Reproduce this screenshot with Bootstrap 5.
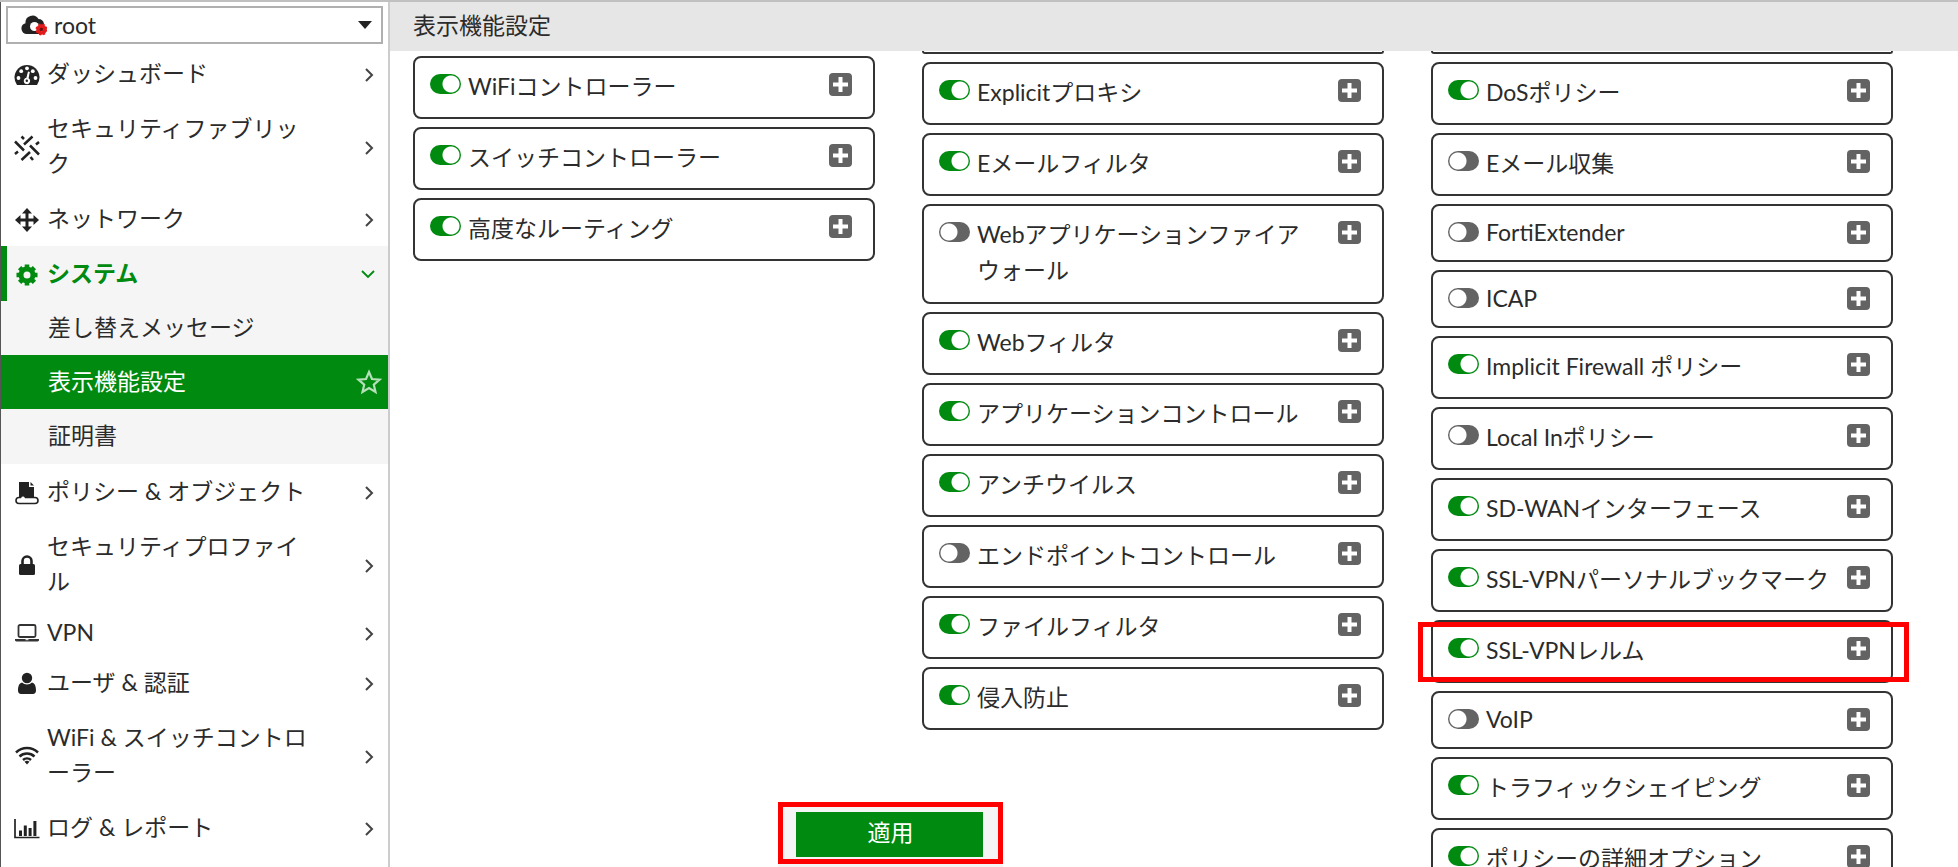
<!DOCTYPE html>
<html lang="ja">
<head>
<meta charset="utf-8">
<meta name="viewport" content="width=device-width, initial-scale=1">
<title>表示機能設定</title>
<link href="https://cdn.jsdelivr.net/npm/bootstrap@5.3.0/dist/css/bootstrap.min.css" rel="stylesheet">
<script src="https://cdn.jsdelivr.net/npm/bootstrap@5.3.0/dist/js/bootstrap.bundle.min.js"></script>
<style>
:root { --green: #008a10; --ink: #2b2b2b; --grey: #636363; }
body { font-family: Lato, "Noto Sans CJK JP", sans-serif; font-size: 23px; line-height: 35px; color: var(--ink); background: #fff; border-top: 2px solid #c0c0c0; }
.app-side { width: 390px; border-left: 1px solid #555; border-right: 2px solid #ccc; }
.vdom { margin: 4px 5px 2px 5px; }
.vdom select { height: 38px; padding: 0 0 0 46px; font-size: 23px; line-height: 34px; color: var(--ink); border: 2px solid #b0b0b0; border-radius: 0; appearance: none; background: none; }
.vdom .cloud { left: 15px; top: 8px; pointer-events: none; }
.vdom .caret { right: 11px; top: 15px; pointer-events: none; }
.side-link { color: var(--ink); padding: 10px 12px 10px 7px; border-left: 6px solid transparent; }
.side-link:hover { color: var(--ink); }
.side-link .side-icon { width: 26px; height: 26px; margin-top: 3px; margin-right: 7px; flex: none; }
.side-link .side-text { width: 267px; line-break: loose; }
.side-link .chev { width: 14px; height: 16px; margin-top: 3px; }
.side-link.latin-row { padding-top: 6px; padding-bottom: 5px; }
.side-group { background: #f5f5f5; padding-bottom: 1px; }
.side-link.open { color: var(--green); font-weight: 700; border-left-color: var(--green); }
.sub-link { color: var(--ink); padding: 9px 6px 10px 47px; }
.sub-link.current { background: var(--green); color: #fff; }
.page-title { font-size: 23px; line-height: 35px; padding: 6px 23px 8px; background: #e6e6e6; font-weight: 400; }
.feature-grid { display: grid; grid-template-columns: repeat(3, minmax(0, 1fr)); column-gap: 47px; padding: 0 65px 0 23px; }
.feature-col { display: flex; flex-direction: column; gap: 8px; }
.feature-col.first-col { padding-top: 5px; }
.feature { position: relative; display: flex; align-items: flex-start; border: 2px solid #333; border-radius: 8px; padding: 10px 21px 13px 15px; line-height: 36px; }
.feature.latin { line-height: 33px; padding-bottom: 11px; }
.feature.two-line { min-height: 100px; }
.feature-end { height: 3px; border: 2px solid #333; border-top: 0; border-radius: 0 0 8px 8px; }
.feature .form-check-input { flex: none; width: 31px; height: 20px; margin: 6px 7px 0 0; border: 0; border-radius: 10px; background: radial-gradient(circle at 10px 10px, #fff 8px, transparent 9px) var(--grey); }
.feature .form-check-input:checked { background: radial-gradient(circle at 21px 10px, #fff 8px, transparent 9px) var(--green); }
.feature label { flex: 1; margin-right: 14px; }
.plus { flex: none; width: 23px; height: 23px; margin-top: 5px; padding: 0; border: 0; background: none; line-height: 0; }
.callout { position: absolute; inset: 0 -18px -1px -15px; border: 5px solid #f00; pointer-events: none; }
.apply-bar { position: absolute; left: 25%; bottom: 0; margin-left: -4px; background: #f5f5f5; padding-bottom: 3px; }
.apply-frame { border: 5px solid #f00; padding: 5px 15px 2px 13px; }
.apply-frame .btn { width: 187px; height: 45px; padding: 0 0 5px 2px; font-size: 23px; line-height: 35px; color: #fff; background: var(--green); border: 0; border-radius: 0; }
</style>
</head>
<body class="d-flex vh-100 overflow-hidden">
<svg class="d-none" xmlns="http://www.w3.org/2000/svg">
  <symbol id="plus" viewBox="0 0 23 23"><rect width="23" height="23" rx="4" fill="#636363"/><path d="M9.500 4h4v5.500H19v4h-5.500V19h-4v-5.500H4v-4h5.500z" fill="#fff"/></symbol>
  <symbol id="chev" viewBox="0 0 14 16"><path d="M4 2l6 6-6 6" fill="none" stroke="#444" stroke-width="2"/></symbol>
</svg>

<aside class="app-side flex-shrink-0 overflow-hidden">
  <div class="vdom position-relative">
    <select class="form-select" aria-label="VDOM"><option>root</option></select>
    <svg class="cloud position-absolute" width="26" height="22" viewBox="0 0 26 22"><path d="M6 20a5.500 5.500 0 0 1-1.500-10.800A7 7 0 0 1 17.500 5a6 6 0 0 1 3 11l-2 4z" fill="#222"/><circle cx="13.500" cy="12.500" r="4.500" fill="#fff"/><circle cx="20.500" cy="15.500" r="3.500" fill="none" stroke="#e31b1b" stroke-width="3.500"/><circle cx="20.500" cy="15.500" r="5" fill="none" stroke="#e31b1b" stroke-width="2" stroke-dasharray="2 2"/><circle cx="20.500" cy="15.500" r="1.800" fill="#7a0d0d"/></svg>
    <svg class="caret position-absolute" width="14" height="8" viewBox="0 0 14 8"><path d="M0 0h14L7 8z" fill="#222"/></svg>
  </div>
  <nav class="d-flex flex-column" aria-label="メニュー">
    <a href="#" class="side-link d-flex align-items-center text-decoration-none">
      <svg class="side-icon" viewBox="0 0 26 26"><path d="M3 23A12.500 12.500 0 1 1 23 23z" fill="#222"/><g fill="#fff"><circle cx="4.500" cy="16" r="1.900"/><circle cx="7.200" cy="9.200" r="1.900"/><circle cx="13" cy="6.300" r="1.900"/><circle cx="18.800" cy="9.200" r="1.900"/><circle cx="21.500" cy="16" r="1.900"/><path d="M14 9.500l1.800.5-1.200 6.200a3.200 3.200 0 1 1-2.200-.4z"/></g><circle cx="12.800" cy="18.800" r="1.200" fill="#222"/></svg>
      <span class="side-text">ダッシュボード</span><svg class="chev ms-auto"><use href="#chev"/></svg></a>
    <a href="#" class="side-link d-flex align-items-center text-decoration-none">
      <svg class="side-icon" viewBox="0 0 26 26" fill="none" stroke="#222" stroke-width="2.500"><path d="M18.500 1.500L10 9.500M1 6.500l9 9M16 10.500l9 9M16 17l-8.500 8M7.500 1.500l2.500 2.500M25 7l-3 2.500M1 19l3-2.500M16.500 22l2.500 3"/></svg>
      <span class="side-text">セキュリティファブリック</span><svg class="chev ms-auto"><use href="#chev"/></svg></a>
    <a href="#" class="side-link d-flex align-items-center text-decoration-none">
      <svg class="side-icon" viewBox="0 0 26 26"><path d="M13 1l5 5.500h-3.500v5h5V8L25 13l-5.500 5v-3.500h-5v5H18L13 25l-5-5.500h3.500v-5h-5V18L1 13l5.500-5v3.500h5v-5H8z" fill="#222"/></svg>
      <span class="side-text">ネットワーク</span><svg class="chev ms-auto"><use href="#chev"/></svg></a>
    <div class="side-group">
      <a href="#" class="side-link open d-flex align-items-center text-decoration-none" aria-expanded="true">
        <svg class="side-icon" viewBox="0 0 26 26"><circle cx="13" cy="13" r="6" fill="none" stroke="#008a10" stroke-width="5"/><g stroke="#008a10" stroke-width="4.600"><path d="M13 2.500v4M13 19.500v4M2.500 13h4M19.500 13h4M5.600 5.600l2.800 2.800M17.600 17.600l2.800 2.800M5.600 20.400l2.800-2.800M17.600 8.400l2.800-2.800"/></g></svg>
        <span class="side-text">システム</span><svg class="ms-auto" width="16" height="12" viewBox="0 0 16 12"><path d="M2 3l6 6 6-6" fill="none" stroke="#008a10" stroke-width="1.800"/></svg></a>
      <a href="#" class="sub-link d-block text-decoration-none">差し替えメッセージ</a>
      <a href="#" class="sub-link current d-flex align-items-center justify-content-between text-decoration-none" aria-current="page">表示機能設定
        <svg width="26" height="26" viewBox="0 0 26 26"><path d="M13 3l3 7 7.500.7-5.700 5 1.700 7.300L13 19l-6.500 4 1.700-7.300-5.700-5L10 10z" fill="none" stroke="#b5e0b8" stroke-width="2.200"/></svg></a>
      <a href="#" class="sub-link d-block text-decoration-none">証明書</a>
    </div>
    <a href="#" class="side-link d-flex align-items-center text-decoration-none">
      <svg class="side-icon" viewBox="0 0 26 26"><path d="M5 2h10v5h5v11H5z" fill="#222"/><path d="M16.500 2L20 5.500h-3.500z" fill="#222"/><path d="M5 23.500a3 3 0 0 1 0-6h1.500c1-2.500 4-2.500 5 0H21a3 3 0 0 1 0 6z" fill="#fff" stroke="#222" stroke-width="1.600"/></svg>
      <span class="side-text">ポリシー &amp; オブジェクト</span><svg class="chev ms-auto"><use href="#chev"/></svg></a>
    <a href="#" class="side-link d-flex align-items-center text-decoration-none">
      <svg class="side-icon" viewBox="0 0 26 26"><rect x="5" y="11" width="16" height="11" rx="1.500" fill="#222"/><path d="M8.500 12V8a4.500 4.500 0 0 1 9 0v4" fill="none" stroke="#222" stroke-width="2.600"/></svg>
      <span class="side-text">セキュリティプロファイル</span><svg class="chev ms-auto"><use href="#chev"/></svg></a>
    <a href="#" class="side-link latin-row d-flex align-items-center text-decoration-none">
      <svg class="side-icon" viewBox="0 0 26 26"><rect x="4.500" y="4" width="17" height="12" rx="1.500" fill="none" stroke="#333" stroke-width="1.800"/><path d="M1 18h24v1.500a2 2 0 0 1-2 1H3a2 2 0 0 1-2-1z" fill="#333"/><path d="M11.500 18.700h3" stroke="#fff"/></svg>
      <span class="side-text">VPN</span><svg class="chev ms-auto"><use href="#chev"/></svg></a>
    <a href="#" class="side-link d-flex align-items-center text-decoration-none">
      <svg class="side-icon" viewBox="0 0 26 26"><circle cx="13" cy="7" r="5.200" fill="#222"/><path d="M8 11.500a7 7 0 0 0 10 0c3 .8 4 4 4 8 0 2-1.200 3.500-3 3.500H7c-1.800 0-3-1.500-3-3.500 0-4 1-7.200 4-8z" fill="#222"/></svg>
      <span class="side-text">ユーザ &amp; 認証</span><svg class="chev ms-auto"><use href="#chev"/></svg></a>
    <a href="#" class="side-link d-flex align-items-center text-decoration-none">
      <svg class="side-icon" viewBox="0 0 26 26" fill="none" stroke="#222" stroke-width="2.500"><path d="M2 8.500a16 16 0 0 1 22 0M5.500 12.500a11 11 0 0 1 15 0M9 16a6 6 0 0 1 8 0"/><path d="M10.500 17.800a4 4 0 0 1 5 0L13 20.500z" fill="#222" stroke="none"/></svg>
      <span class="side-text">WiFi &amp; スイッチコントローラー</span><svg class="chev ms-auto"><use href="#chev"/></svg></a>
    <a href="#" class="side-link d-flex align-items-center text-decoration-none">
      <svg class="side-icon" viewBox="0 0 26 26"><path d="M1 3v18.500h24.500" fill="none" stroke="#222" stroke-width="1.700"/><path d="M5 14.500h3V20H5zM9.800 9.500h3V20h-3zM14.600 12h3v8h-3zM19.400 5h3v15h-3z" fill="#222"/></svg>
      <span class="side-text">ログ &amp; レポート</span><svg class="chev ms-auto"><use href="#chev"/></svg></a>
  </nav>
</aside>

<main class="flex-grow-1 d-flex flex-column position-relative overflow-hidden">
  <h1 class="page-title mb-0">表示機能設定</h1>
  <div class="feature-grid flex-grow-1 overflow-hidden">
    <div class="feature-col first-col">
      <div class="feature"><input class="form-check-input" type="checkbox" role="switch" id="f1" checked><label for="f1">WiFiコントローラー</label><button type="button" class="plus" aria-label="展開"><svg width="23" height="23"><use href="#plus"/></svg></button></div>
      <div class="feature"><input class="form-check-input" type="checkbox" role="switch" id="f2" checked><label for="f2">スイッチコントローラー</label><button type="button" class="plus" aria-label="展開"><svg width="23" height="23"><use href="#plus"/></svg></button></div>
      <div class="feature"><input class="form-check-input" type="checkbox" role="switch" id="f3" checked><label for="f3">高度なルーティング</label><button type="button" class="plus" aria-label="展開"><svg width="23" height="23"><use href="#plus"/></svg></button></div>
    </div>
    <div class="feature-col">
      <div class="feature-end"></div>
      <div class="feature"><input class="form-check-input" type="checkbox" role="switch" id="g1" checked><label for="g1">Explicitプロキシ</label><button type="button" class="plus" aria-label="展開"><svg width="23" height="23"><use href="#plus"/></svg></button></div>
      <div class="feature"><input class="form-check-input" type="checkbox" role="switch" id="g2" checked><label for="g2">Eメールフィルタ</label><button type="button" class="plus" aria-label="展開"><svg width="23" height="23"><use href="#plus"/></svg></button></div>
      <div class="feature two-line"><input class="form-check-input" type="checkbox" role="switch" id="g3"><label for="g3">Webアプリケーションファイア<span class="text-nowrap">ウォール</span></label><button type="button" class="plus" aria-label="展開"><svg width="23" height="23"><use href="#plus"/></svg></button></div>
      <div class="feature"><input class="form-check-input" type="checkbox" role="switch" id="g4" checked><label for="g4">Webフィルタ</label><button type="button" class="plus" aria-label="展開"><svg width="23" height="23"><use href="#plus"/></svg></button></div>
      <div class="feature"><input class="form-check-input" type="checkbox" role="switch" id="g5" checked><label for="g5">アプリケーションコントロール</label><button type="button" class="plus" aria-label="展開"><svg width="23" height="23"><use href="#plus"/></svg></button></div>
      <div class="feature"><input class="form-check-input" type="checkbox" role="switch" id="g6" checked><label for="g6">アンチウイルス</label><button type="button" class="plus" aria-label="展開"><svg width="23" height="23"><use href="#plus"/></svg></button></div>
      <div class="feature"><input class="form-check-input" type="checkbox" role="switch" id="g7"><label for="g7">エンドポイントコントロール</label><button type="button" class="plus" aria-label="展開"><svg width="23" height="23"><use href="#plus"/></svg></button></div>
      <div class="feature"><input class="form-check-input" type="checkbox" role="switch" id="g8" checked><label for="g8">ファイルフィルタ</label><button type="button" class="plus" aria-label="展開"><svg width="23" height="23"><use href="#plus"/></svg></button></div>
      <div class="feature"><input class="form-check-input" type="checkbox" role="switch" id="g9" checked><label for="g9">侵入防止</label><button type="button" class="plus" aria-label="展開"><svg width="23" height="23"><use href="#plus"/></svg></button></div>
    </div>
    <div class="feature-col">
      <div class="feature-end"></div>
      <div class="feature"><input class="form-check-input" type="checkbox" role="switch" id="h1" checked><label for="h1">DoSポリシー</label><button type="button" class="plus" aria-label="展開"><svg width="23" height="23"><use href="#plus"/></svg></button></div>
      <div class="feature"><input class="form-check-input" type="checkbox" role="switch" id="h2"><label for="h2">Eメール収集</label><button type="button" class="plus" aria-label="展開"><svg width="23" height="23"><use href="#plus"/></svg></button></div>
      <div class="feature latin"><input class="form-check-input" type="checkbox" role="switch" id="h3"><label for="h3">FortiExtender</label><button type="button" class="plus" aria-label="展開"><svg width="23" height="23"><use href="#plus"/></svg></button></div>
      <div class="feature latin"><input class="form-check-input" type="checkbox" role="switch" id="h4"><label for="h4">ICAP</label><button type="button" class="plus" aria-label="展開"><svg width="23" height="23"><use href="#plus"/></svg></button></div>
      <div class="feature"><input class="form-check-input" type="checkbox" role="switch" id="h5" checked><label for="h5">Implicit Firewall ポリシー</label><button type="button" class="plus" aria-label="展開"><svg width="23" height="23"><use href="#plus"/></svg></button></div>
      <div class="feature"><input class="form-check-input" type="checkbox" role="switch" id="h6"><label for="h6">Local Inポリシー</label><button type="button" class="plus" aria-label="展開"><svg width="23" height="23"><use href="#plus"/></svg></button></div>
      <div class="feature"><input class="form-check-input" type="checkbox" role="switch" id="h7" checked><label for="h7">SD-WANインターフェース</label><button type="button" class="plus" aria-label="展開"><svg width="23" height="23"><use href="#plus"/></svg></button></div>
      <div class="feature"><input class="form-check-input" type="checkbox" role="switch" id="h8" checked><label for="h8">SSL-VPNパーソナルブックマーク</label><button type="button" class="plus" aria-label="展開"><svg width="23" height="23"><use href="#plus"/></svg></button></div>
      <div class="feature"><input class="form-check-input" type="checkbox" role="switch" id="h9" checked><label for="h9">SSL-VPNレルム</label><button type="button" class="plus" aria-label="展開"><svg width="23" height="23"><use href="#plus"/></svg></button><div class="callout"></div></div>
      <div class="feature latin"><input class="form-check-input" type="checkbox" role="switch" id="h10"><label for="h10">VoIP</label><button type="button" class="plus" aria-label="展開"><svg width="23" height="23"><use href="#plus"/></svg></button></div>
      <div class="feature"><input class="form-check-input" type="checkbox" role="switch" id="h11" checked><label for="h11">トラフィックシェイピング</label><button type="button" class="plus" aria-label="展開"><svg width="23" height="23"><use href="#plus"/></svg></button></div>
      <div class="feature"><input class="form-check-input" type="checkbox" role="switch" id="h12" checked><label for="h12">ポリシーの詳細オプション</label><button type="button" class="plus" aria-label="展開"><svg width="23" height="23"><use href="#plus"/></svg></button></div>
    </div>
  </div>
  <div class="apply-bar"><div class="apply-frame"><button type="button" class="btn d-block">適用</button></div></div>
</main>
</body>
</html>
